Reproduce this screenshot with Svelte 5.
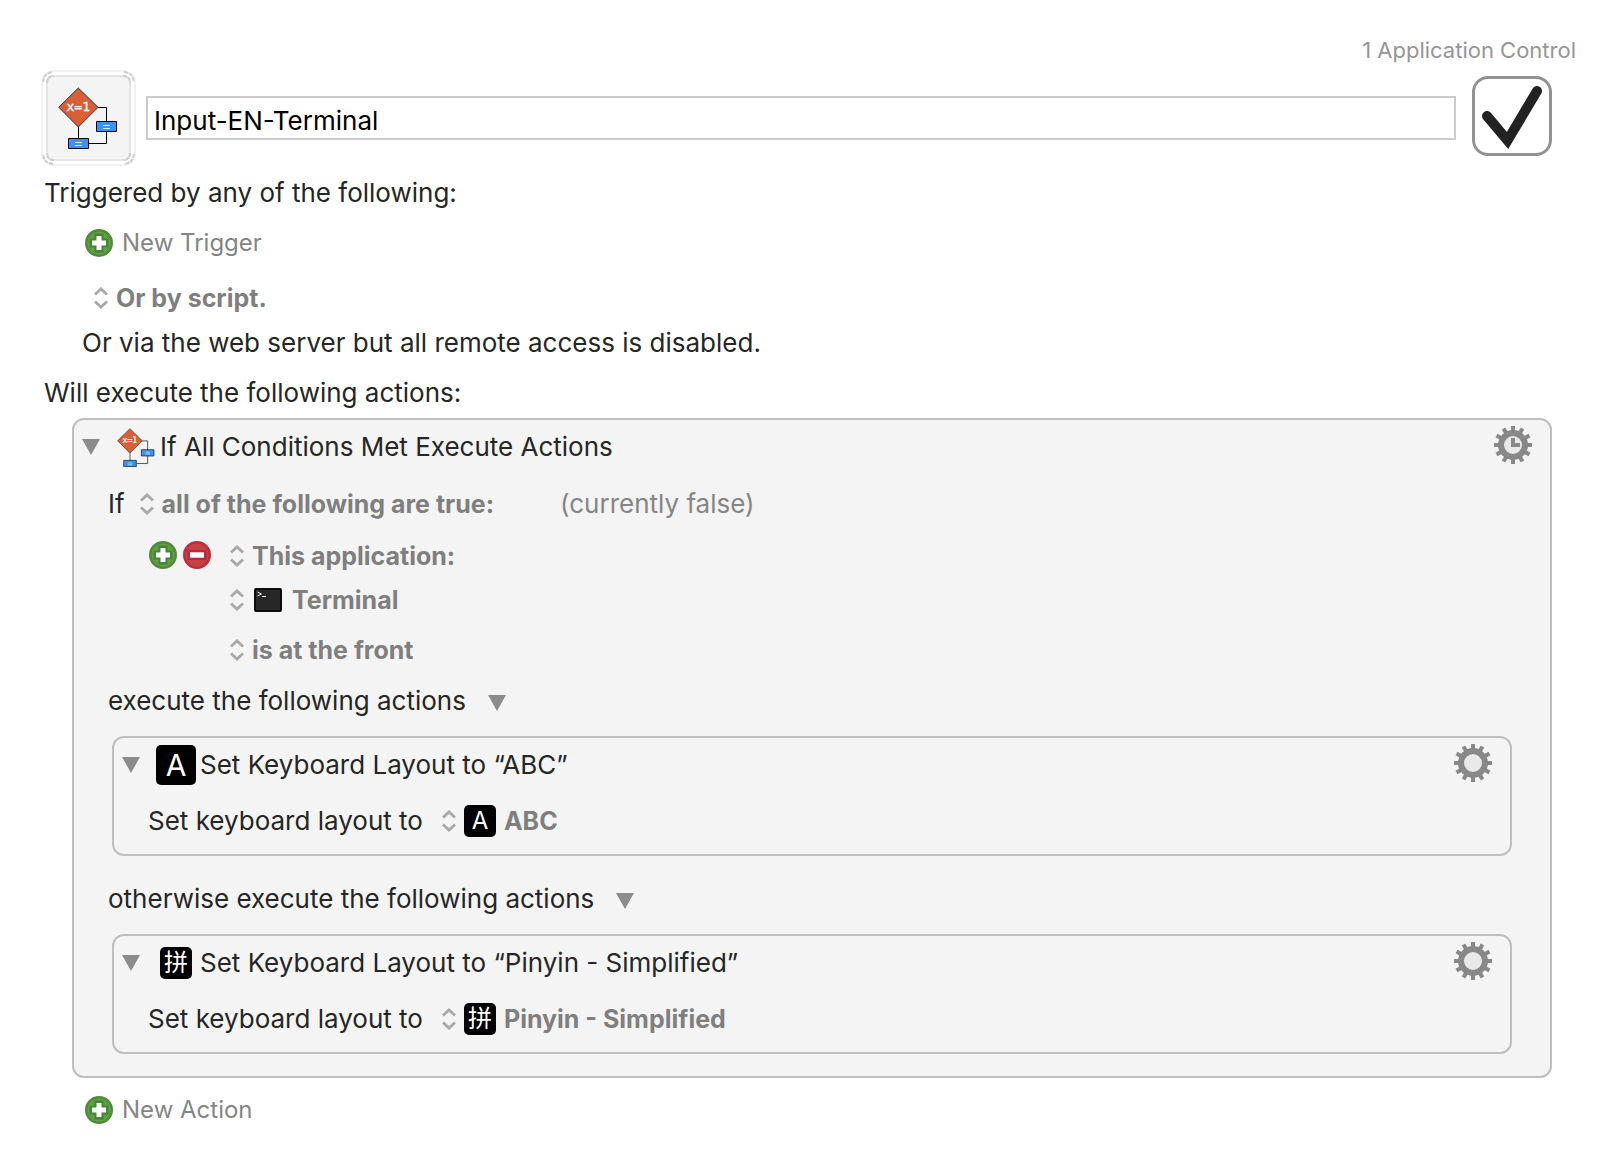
<script>
  let name = $state('Input-EN-Terminal');
  let enabled = $state(true);
  const teeth = Array.from({ length: 12 }, (_, i) => i * 30);
  const layouts = [
    { title: 'ABC', glyph: 'A', intro: 'execute the following actions', large: true },
    { title: 'Pinyin - Simplified', glyph: '拼', intro: 'otherwise execute the following actions', large: false }
  ];
</script>

{#snippet flow()}
  <svg class="flow" viewBox="0 0 60 62" aria-hidden="true">
    <path d="M40 20.5h8.5v36H31M20.5 40v12" fill="none" stroke="#000" />
    <path d="M20.3 1 40 20.3 20.3 40 .8 20.3z" fill="#d95f38" stroke="#222" stroke-width=".9" />
    <text x="20.3" y="24.2" text-anchor="middle" class="expr">x=1</text>
    <g fill="#3695f8" stroke="#000"><path d="M38.500 34.500h20v10h-20zM10.500 51.500h20v10h-20z" /></g>
    <path d="M45 38.500h7M45 41.500h7M17 55.500h7M17 58.500h7" stroke="#d8ebff" stroke-width="1.200" />
  </svg>
{/snippet}

{#snippet plus()}
  <svg class="round" viewBox="0 0 28 28" aria-hidden="true">
    <circle cx="14" cy="14" r="12.800" fill="#61a03c" stroke="#4c8b3b" stroke-width="2.400" />
    <path d="M14 4.500v19M4.500 14h19" stroke="#43853b" stroke-width="9" />
    <path d="M14 7v14M7 14h14" stroke="#fff" stroke-width="5" />
  </svg>
{/snippet}

{#snippet minus()}
  <svg class="round" viewBox="0 0 28 28" aria-hidden="true">
    <circle cx="14" cy="14" r="12.800" fill="#c6423f" stroke="#b82f43" stroke-width="2.400" />
    <path d="M4.500 14h19" stroke="#b32a42" stroke-width="10" />
    <path d="M7 14h14" stroke="#fff" stroke-width="5.400" />
  </svg>
{/snippet}

{#snippet chevrons()}
  <svg class="chevrons" viewBox="0 0 14 22" aria-hidden="true">
    <path d="M1 7.500 7 2l6 5.500M1 14.500 7 20l6-5.500" fill="none" stroke="#a8a8a8" stroke-width="2.800" />
  </svg>
{/snippet}

{#snippet disclosure(label)}
  <button class="disclosure" aria-label={label}>
    <svg viewBox="0 0 18 16" aria-hidden="true"><path d="M0 0h18L9 16z" fill="#8c8c8c" /></svg>
  </button>
{/snippet}

{#snippet gear(clock)}
  <button class="gear" aria-label="Action options">
    <svg viewBox="-19 -19 38 38" aria-hidden="true">
      {#each teeth as angle}
        <path d="M0-12v-7" stroke="#888" stroke-width="4" transform="rotate({angle})" />
      {/each}
      <circle r="12" fill="#e9e9e9" stroke="#888" stroke-width="6" />
      {#if clock}
        <path d="M0-7V0h7" fill="none" stroke="#888" stroke-width="4" />
      {/if}
    </svg>
  </button>
{/snippet}

<main>
  <p class="group">1 Application Control</p>

  <header>
    <button class="well" aria-label="Macro icon">
      <svg class="frame" viewBox="0 0 96 96" fill="none" aria-hidden="true">
        <rect x="2" y="1" width="93" height="94" rx="12" stroke="#f1f1f1" stroke-width="2" />
        <rect x="7" y="6" width="83" height="84" rx="6" fill="#f4f4f4" stroke="#e5e5e5" stroke-width="2" />
        <path d="M3 12Q4 3 13 2M84 2q9 1 10 10M94 84q-1 9-10 10M13 94q-9-1-10-10M7 13q0-7 7-7M83 6q7 0 7 7M90 83q0 7-7 7M14 90q-7 0-7-7" stroke="#cdcdcd" stroke-width="2" stroke-dasharray="4 1" />
      </svg>
      {@render flow()}
    </button>
    <input class="name" type="text" aria-label="Macro name" bind:value={name} />
    <label class="enable">
      <input type="checkbox" aria-label="Macro enabled" bind:checked={enabled} />
      {#if enabled}
        <svg viewBox="0 0 80 80" aria-hidden="true">
          <path d="M15 40 35.500 64.500 65 15" fill="none" stroke="#222" stroke-width="10" stroke-linecap="round" />
        </svg>
      {/if}
    </label>
  </header>

  <section>
    <p class="row heading">Triggered by any of the following:</p>
    <button class="row add">{@render plus()}New Trigger</button>
    <label class="row popup script">
      {@render chevrons()}
      <select aria-label="Script trigger"><option>Or by script.</option></select>
    </label>
    <p class="row remote">Or via the web server but all remote access is disabled.</p>
  </section>

  <section>
    <p class="row heading">Will execute the following actions:</p>
    <article class="card">
      <div class="title">
        {@render disclosure('Collapse If action')}
        <span class="slot">{@render flow()}</span>
        <h2>If All Conditions Met Execute Actions</h2>
        {@render gear(true)}
      </div>
      <div class="row match">
        <span>If</span>
        <label class="popup">
          {@render chevrons()}
          <select aria-label="Match rule"><option>all of the following are true:</option></select>
        </label>
        <span class="status">(currently false)</span>
      </div>
      <div class="condition">
        <div class="pair">
          <button aria-label="Add condition">{@render plus()}</button>
          <button aria-label="Remove condition">{@render minus()}</button>
        </div>
        <div class="fields">
          <label class="popup kind">
            {@render chevrons()}
            <select aria-label="Condition type"><option>This application:</option></select>
          </label>
          <label class="popup app">
            {@render chevrons()}
            <svg class="terminal" viewBox="0 0 28 24" aria-hidden="true">
              <rect x="1" y="1" width="26" height="22" rx="1" fill="#272727" stroke="#0b0d0d" stroke-width="2" />
              <path d="m3.500 4 4 2-4 2M8 8.500h4" fill="none" stroke="#eee" stroke-width="1" />
            </svg>
            <select aria-label="Application"><option>Terminal</option></select>
          </label>
          <label class="popup state">
            {@render chevrons()}
            <select aria-label="Application state"><option>is at the front</option></select>
          </label>
        </div>
      </div>

      {#each layouts as layout}
        <div class="branch">
          <div class="row intro">
            <span>{layout.intro}</span>
            {@render disclosure('Collapse branch')}
          </div>
          <article class="card">
            <div class="title">
              {@render disclosure('Collapse action')}
              <span class="slot"><span class="key" class:large={layout.large}>{layout.glyph}</span></span>
              <h3>Set Keyboard Layout to “{layout.title}”</h3>
              {@render gear(false)}
            </div>
            <div class="row setting">
              <span>Set keyboard layout to</span>
              <label class="popup">
                {@render chevrons()}
                <span class="key">{layout.glyph}</span>
                <select aria-label="Keyboard layout"><option>{layout.title}</option></select>
              </label>
            </div>
          </article>
        </div>
      {/each}
    </article>
    <button class="row add last">{@render plus()}New Action</button>
  </section>
</main>

<style>
  :global(body) {
    margin: 0;
    background: #fff;
  }
  main {
    box-sizing: border-box;
    padding: 34px 62px 30px 40px;
    color: #262626;
    font: 26px/32px Inter, 'Noto Sans CJK SC', sans-serif;
    white-space: nowrap;
  }
  p, h2, h3 {
    margin: 0;
    font: inherit;
  }
  button, input, select {
    margin: 0;
    padding: 0;
    border: 0;
    background: none;
    color: inherit;
    font: inherit;
  }
  svg {
    display: block;
    flex: none;
  }
  section {
    display: flex;
    flex-direction: column;
  }
  .group {
    margin-right: -24px;
    color: #969696;
    font-size: 22px;
    text-align: right;
  }
  header {
    display: flex;
    align-items: center;
    margin-top: 4px;
  }
  .well {
    display: grid;
    place-items: center;
    flex: none;
    width: 96px;
    height: 96px;
  }
  .well > :global(svg) {
    grid-area: 1 / 1;
  }
  .frame {
    width: 96px;
    height: 96px;
  }
  .flow {
    width: 60px;
    height: 62px;
  }
  .expr {
    fill: #fff;
    stroke: #fff;
    stroke-width: 0.3px;
    font: 13px 'DejaVu Sans Mono', monospace;
  }
  .name {
    box-sizing: border-box;
    flex: 1;
    min-width: 0;
    height: 44px;
    margin: 0 16px 0 10px;
    padding: 5px 6px 0;
    border: 2px solid #ccc;
    background: #fff;
    color: #000;
  }
  .enable {
    display: grid;
    flex: none;
    width: 80px;
    height: 80px;
    margin-bottom: 4px;
  }
  .enable > * {
    grid-area: 1 / 1;
  }
  .enable input {
    box-sizing: border-box;
    width: 80px;
    height: 80px;
    border: 3px solid #929292;
    border-radius: 16px;
    appearance: none;
  }
  .enable svg {
    pointer-events: none;
  }
  .row {
    display: flex;
    align-items: center;
    height: 48px;
  }
  .heading {
    margin: 3px 0 1px 4px;
  }
  .add {
    align-self: flex-start;
    gap: 9px;
    margin: 1px 0 0 45px;
    color: #858585;
    font-size: 24px;
  }
  .round {
    width: 28px;
    height: 28px;
  }
  .popup {
    display: flex;
    align-items: center;
    gap: 8px;
    color: #7f7f7f;
    font-size: 25px;
    font-weight: 700;
  }
  .popup select {
    appearance: none;
    field-sizing: content;
  }
  .chevrons {
    width: 14px;
    height: 22px;
  }
  .script {
    margin: 7px 0 0 54px;
  }
  .remote {
    height: 42px;
    margin: 0 0 2px 42px;
  }
  .card {
    border: 2px solid #bfbfbf;
    border-radius: 12px;
    background: #f4f4f4;
  }
  section > .card {
    margin-left: 32px;
    padding-bottom: 22px;
  }
  .title {
    display: flex;
    align-items: center;
    height: 54px;
    padding: 0 18px 0 8px;
  }
  .title h2, .title h3 {
    flex: 1;
    margin-left: 4px;
  }
  .disclosure svg {
    width: 18px;
    height: 16px;
  }
  .slot {
    display: grid;
    place-items: center;
    width: 40px;
    margin-left: 16px;
  }
  .slot .flow {
    width: 38px;
    height: 39px;
  }
  .gear {
    margin-bottom: 4px;
  }
  .gear svg {
    width: 38px;
    height: 38px;
  }
  .match {
    height: 58px;
    margin-top: 1px;
    padding-left: 34px;
  }
  .match .popup {
    margin-left: 15px;
  }
  .status {
    margin-left: 66px;
    color: #858585;
  }
  .condition {
    display: flex;
    padding-left: 75px;
  }
  .pair {
    display: flex;
    align-items: center;
    gap: 6px;
    height: 44px;
    margin-right: 19px;
  }
  .kind {
    height: 46px;
  }
  .app {
    height: 42px;
  }
  .state {
    height: 57px;
  }
  .terminal {
    width: 28px;
    height: 24px;
    margin: 0 2px;
  }
  .branch .card {
    margin: 12px 38px 0;
    padding-bottom: 4px;
  }
  .branch + .branch {
    margin-top: 20px;
  }
  .intro {
    gap: 22px;
    height: 46px;
    padding-left: 34px;
  }
  .intro .disclosure {
    margin-top: 4px;
  }
  .setting {
    gap: 19px;
    height: 58px;
    padding-left: 34px;
  }
  .key {
    display: grid;
    place-items: center;
    width: 32px;
    height: 32px;
    border-radius: 5px;
    background: #000;
    color: #fff;
    font-size: 24px;
    font-weight: 400;
    line-height: 32px;
  }
  .large {
    width: 40px;
    height: 40px;
    font-size: 30px;
    line-height: 40px;
  }
  .last {
    margin-top: 8px;
  }
</style>
